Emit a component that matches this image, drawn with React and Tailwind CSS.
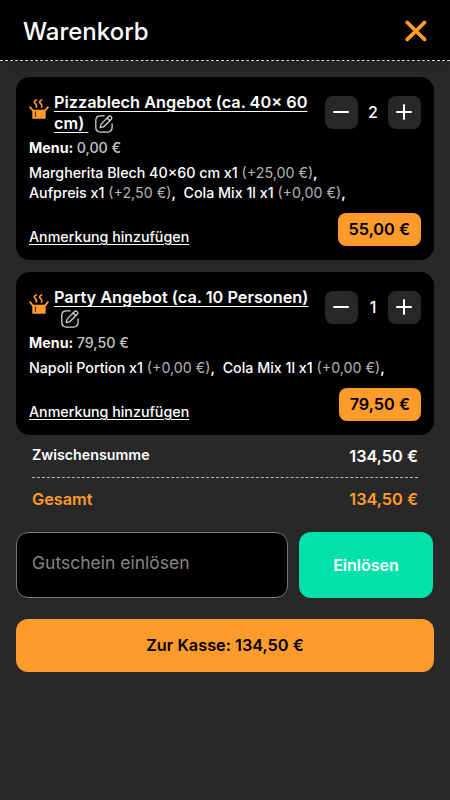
import React, { useState } from 'react';

const initialItems = [
    {
        id: 1,
        name: 'Pizzablech Angebot (ca. 40× 60 cm)',
        menuPrice: 0,
        price: 55,
        quantity: 2,
        extras: [
            { name: 'Margherita Blech 40×60 cm', count: 1, price: 25 },
            { name: 'Aufpreis', count: 1, price: 2.5 },
            { name: 'Cola Mix 1l', count: 1, price: 0 },
        ],
    },
    {
        id: 2,
        name: 'Party Angebot (ca. 10 Personen)',
        menuPrice: 79.5,
        price: 79.5,
        quantity: 1,
        extras: [
            { name: 'Napoli Portion', count: 1, price: 0 },
            { name: 'Cola Mix 1l', count: 1, price: 0 },
        ],
    },
];

const formatPrice = (value) => `${value.toFixed(2).replace('.', ',')} €`;

function CloseIcon() {
    return (
        <svg width="22" height="22" viewBox="0 0 22 22" fill="none" stroke="#ff9b2b" strokeWidth="3.8" strokeLinecap="round">
            <path d="M2.3 2.5 19.5 19.4M19.5 2.5 2.3 19.4" />
        </svg>
    );
}

function HotBoxIcon() {
    return (
        <svg className="shrink-0" width="20" height="20" viewBox="0 0 20 20" fill="none" stroke="#ff9b2b" strokeLinecap="round" strokeLinejoin="round">
            <path d="M7.4.9C5 2.2 4.8 3.2 6.1 4.4S8.2 6.6 7.2 8M12.7.9c-2.4 1.3-2.6 2.3-1.3 3.5s2.1 2.2 1.1 3.6" strokeWidth="1.6" />
            <path d="M1.1 8.2 3.8 11.4M18.9 8.2 16.2 11.4" strokeWidth="1.8" />
            <path d="M4 11.4H16V19H4Z" fill="#ff9b2b" strokeWidth="1.4" />
            <path d="M6.5 12.9V17.5" stroke="#4a2a05" strokeWidth="1.1" />
        </svg>
    );
}

function EditIcon() {
    return (
        <svg className="ml-[7px] inline-block align-[-4px]" width="18" height="18" viewBox="0 0 18 18" fill="none" stroke="#d4d4d4" strokeWidth="1.3" strokeLinecap="round" strokeLinejoin="round">
            <path d="M9.2.9H5.6C2.3.9.8 2.4.8 5.7v6.6c0 3.3 1.5 4.8 4.8 4.8h6.7c3.3 0 4.8-1.5 4.8-4.8V9" />
            <path d="M13.6 1.5 6.5 8.6c-.3.3-.5.7-.6 1.1l-.7 2.9 2.9-.7c.4-.1.8-.3 1.1-.6l7.1-7.1c.7-.7.7-1.6 0-2.3l-.4-.4c-.7-.7-1.6-.7-2.3 0Z" />
            <path d="M12.1 3 14.8 5.7" />
        </svg>
    );
}

function QuantityButton({ plus, onClick }) {
    return (
        <button onClick={onClick} className="flex h-[33px] w-[33px] items-center justify-center rounded-lg bg-[#282828]">
            <svg className="-mt-px -ml-px" width="16" height="16" viewBox="0 0 16 16" fill="none" stroke="#fff" strokeWidth="2" strokeLinecap="round">
                <path d="M1 8h14" />
                {plus && <path d="M8 1v14" />}
            </svg>
        </button>
    );
}

function CartItem({ item, onChange }) {
    return (
        <div className="flex flex-col rounded-[14px] bg-black px-[13px] pt-[15px] pb-[14px]">
            <div className="flex items-start">
                <div className="mt-[7px] mr-[5px]">
                    <HotBoxIcon />
                </div>
                <div className="w-[260px] text-[16.3px] leading-[20.5px] font-semibold">
                    <span className="underline decoration-1 underline-offset-[3px]">{item.name} </span>
                    <EditIcon />
                </div>
                <div className="mt-1 ml-auto flex items-center">
                    <QuantityButton onClick={() => onChange(-1)} />
                    <span className="-mt-px w-[30px] text-center text-base font-medium">{item.quantity}</span>
                    <QuantityButton plus onClick={() => onChange(1)} />
                </div>
            </div>
            <div className="mt-[5px] text-[14.25px] leading-5 font-bold">
                Menu: <span className="font-medium text-[#c4c4c4]">{formatPrice(item.menuPrice)}</span>
            </div>
            <div className="mt-[5px] text-[14.25px] leading-5 font-medium">
                {item.extras.map((extra, i) => (
                    <React.Fragment key={i}>
                        <span className="whitespace-nowrap">
                            {extra.name} x{extra.count}{' '}
                            <span className="font-normal text-[#b4b4b4]">(+{formatPrice(extra.price)})</span>
                            <span className="font-semibold">,</span>{'\u00a0'}
                        </span>{' '}
                    </React.Fragment>
                ))}
            </div>
            <div className="mt-[10px] flex items-end justify-between">
                <button className="-mb-px text-[14.25px] leading-5 font-medium underline decoration-1 underline-offset-2">
                    Anmerkung hinzufügen
                </button>
                <div className="flex h-[33px] items-center rounded-lg bg-[#ff9b2b] px-[11px] text-[16.3px] font-semibold text-black">
                    {formatPrice(item.price)}
                </div>
            </div>
        </div>
    );
}

function App() {
    const [items, setItems] = useState(initialItems);

    const changeQuantity = (id, delta) => {
        setItems(items.map((item) => (
            item.id === id ? { ...item, quantity: Math.max(1, item.quantity + delta) } : item
        )));
    };

    const total = items.reduce((sum, item) => sum + item.price, 0);

    return (
        <div className="min-h-screen bg-[#282828] font-['Inter',sans-serif] text-white">
            {/* Header */}
            <header className="flex h-[61px] items-center justify-between border-b border-dashed border-[#d0d0d0] bg-black px-[23px] shadow-md">
                <h1 className="mt-1 text-2xl font-medium">Warenkorb</h1>
                <button className="mt-0.5">
                    <CloseIcon />
                </button>
            </header>

            {/* Items */}
            <div className="flex flex-col gap-3 px-4 pt-4">
                {items.map((item) => (
                    <CartItem key={item.id} item={item} onChange={(delta) => changeQuantity(item.id, delta)} />
                ))}
            </div>

            {/* Totals */}
            <div className="mx-8 font-semibold">
                <div className="flex h-[43px] items-center justify-between border-b border-dashed border-[#b8b8b8]">
                    <span className="mb-[3px] text-[14.25px]">Zwischensumme</span>
                    <span className="text-[16.3px]">{formatPrice(total)}</span>
                </div>
                <div className="flex h-[43px] items-center justify-between text-[16.3px] text-[#ff9b2b]">
                    <span>Gesamt</span>
                    <span>{formatPrice(total)}</span>
                </div>
            </div>

            {/* Voucher */}
            <div className="mx-4 mt-[11px] flex h-[66px] gap-[11px]">
                <input
                    className="w-[272px] rounded-xl border border-[#777] bg-black px-[15px] pb-1 text-[17.5px] placeholder:text-[#858585]"
                    placeholder="Gutschein einlösen"
                />
                <button className="mr-px flex-1 rounded-xl bg-[#00e1ab] text-base font-semibold">Einlösen</button>
            </div>

            <div className="mx-4 mt-[21px]">
                <button className="h-[53px] w-full rounded-xl bg-[#ff9b2b] text-[16.3px] font-semibold text-black">
                    Zur Kasse: {formatPrice(total)}
                </button>
            </div>
        </div>
    );
}

export default App;
